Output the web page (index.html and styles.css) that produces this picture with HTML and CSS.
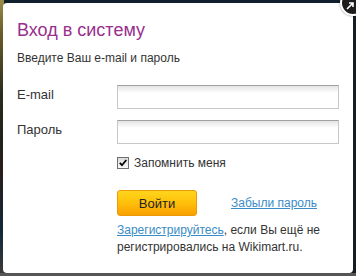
FILE: index.html
```html
<!DOCTYPE html>
<html lang="ru">

<head>
    <meta charset="UTF-8">
    <meta name="viewport" content="width=device-width, initial-scale=1.0">
    <title>Вход в систему</title>
    <link rel="stylesheet" href="styles.css">
</head>

<body>

    <div class="backdrop">
        <div class="dialog">
            <h1 class="title">Вход в систему</h1>
            <p class="hint">Введите Ваш e-mail и пароль</p>

            <div class="form">
                <label class="row">
                    <span class="label">E-mail</span>
                    <input class="field" type="text">
                </label>
                <label class="row">
                    <span class="label">Пароль</span>
                    <input class="field" type="password">
                </label>
                <div class="row">
                    <span class="label"></span>
                    <label class="remember">
                        <span class="check">
                            <svg width="8" height="8" viewBox="0 0 8 8">
                                <path d="M0.8 3.8 L3 6.2 L7.3 1" fill="none" stroke="#000" stroke-width="1.8"/>
                            </svg>
                        </span>
                        Запомнить меня
                    </label>
                </div>
                <div class="row actions">
                    <span class="label"></span>
                    <a class="btn-login">Войти</a>
                    <a class="link forgot" href="#">Забыли пароль</a>
                </div>
                <div class="row">
                    <span class="label"></span>
                    <p class="register"><a class="link" href="#">Зарегистрируйтесь</a>, если Вы ещё не регистрировались на Wikimart.ru.</p>
                </div>
            </div>
        </div>
        <a class="close" href="#">
            <svg width="10" height="10" viewBox="0 0 10 10">
                <path d="M2 8 L8 2 M4 2 H8 V6" fill="none" stroke="#fff" stroke-width="1.6"/>
            </svg>
        </a>
    </div>

</body>

</html>
```

FILE: styles.css
```css
body {
    margin: 0;
    padding: 0;
    font-family: 'Liberation Sans', Arial, sans-serif;
    background: #4a4a4a;
}

.backdrop {
    position: relative;
    width: 356px;
    height: 276px;
    box-sizing: border-box;
    padding: 3px 3px 3px 3px;
    background: linear-gradient(to bottom, #0f1f2e 0, #0f1f2e 273px, #555555 273px);
    overflow: hidden;
}

.backdrop::before {
    content: "";
    position: absolute;
    left: 0;
    top: 0;
    width: 4px;
    height: 273px;
    background: linear-gradient(to bottom, #9a8c4a 0, #6b5c2a 12%, #2a2a1c 35%, #1f2418 50%, #2a1c1a 62%, #12283a 85%, #3a3a3a 100%);
}

.backdrop::after {
    content: "";
    position: absolute;
    right: 0;
    top: 0;
    width: 2px;
    height: 273px;
    background: #1a1a1f;
}

.dialog {
    position: relative;
    z-index: 1;
    height: 270px;
    box-sizing: border-box;
    background: #ffffff;
    border-radius: 4px;
    padding: 16px 14px 0 14px;
}

.title {
    margin: 0;
    font-weight: normal;
    font-size: 18px;
    line-height: 22px;
    color: #992f8d;
}

.hint {
    margin: 10px 0 0 0;
    font-size: 12px;
    line-height: 15px;
    color: #333333;
}

.form {
    margin-top: 19px;
    display: flex;
    flex-direction: column;
}

.row {
    display: flex;
    align-items: flex-start;
}

.label {
    width: 100px;
    flex: none;
    padding-top: 2px;
    font-size: 13px;
    line-height: 15px;
    color: #333333;
}

.field {
    width: 223px;
    height: 24px;
    box-sizing: border-box;
    margin: 0 0 11px 0;
    border: 1px solid #c8c8c8;
    border-top-color: #a0a0a0;
    background: linear-gradient(to bottom, #e4e4e4 0, #ffffff 7px);
}

.remember {
    margin-top: 1px;
    display: flex;
    align-items: center;
    gap: 5px;
    font-size: 12px;
    line-height: 14px;
    color: #333333;
}

.check {
    width: 10px;
    height: 10px;
    border: 1px solid #707070;
    background: linear-gradient(to bottom, #dcdcdc, #f8f8f8);
    display: flex;
    align-items: center;
    justify-content: center;
}

.actions {
    margin-top: 20px;
    align-items: center;
}

.actions .label {
    padding-top: 0;
}

.btn-login {
    width: 80px;
    height: 26px;
    box-sizing: border-box;
    display: flex;
    align-items: center;
    justify-content: center;
    border: 1px solid #eb9a0a;
    border-radius: 3px;
    background: linear-gradient(to bottom, #ffd51c 0, #ffbf0a 50%, #f9a000 100%);
    font-size: 13px;
    color: #222222;
    cursor: pointer;
}

.forgot {
    margin-left: 34px;
    font-size: 12px;
    line-height: 14px;
}

.link {
    color: #3a8cc6;
    text-decoration: underline;
}

.register {
    margin: 6px 0 0 0;
    font-size: 12px;
    line-height: 17px;
    color: #333333;
    width: 223px;
}

.close {
    position: absolute;
    z-index: 2;
    left: 340px;
    top: -10px;
    width: 22px;
    height: 22px;
    border-radius: 50%;
    background: #1c1c1c;
    border: 2px solid #ffffff;
    box-shadow: 0 0 2px rgba(0, 0, 0, 0.5);
    display: flex;
    align-items: flex-end;
    justify-content: flex-start;
    padding: 0;
    box-sizing: content-box;
}

.close svg {
    margin: 0 0 3px 3px;
}
```
